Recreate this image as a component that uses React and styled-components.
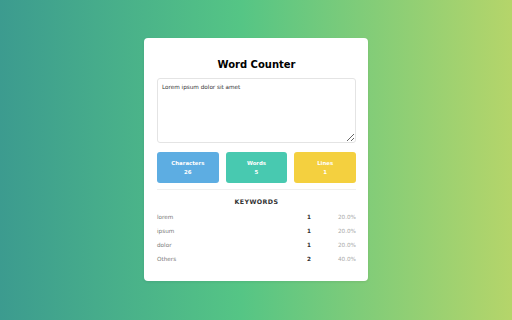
import styled, { createGlobalStyle } from "styled-components";

const Global = createGlobalStyle`
  html, body, #root { height: 100%; }
  body {
    margin: 0;
    font-family: "DejaVu Sans", "Noto Sans", sans-serif;
  }
`;

const Page = styled.div`
  width: 100vw;
  height: 100vh;
  background: linear-gradient(to right, #3c9b8f 0%, #55c585 47%, #b5d56a 100%);
  display: flex;
  justify-content: center;
  padding-top: 38px;
  box-sizing: border-box;
`;

const Card = styled.div`
  width: 224px;
  height: 243px;
  box-sizing: border-box;
  background: #fff;
  border-radius: 4px;
  padding: 19px 12px 0 13px;
  box-shadow: 0 1px 3px rgba(0, 0, 0, 0.08);
`;

const Title = styled.h1`
  margin: 0 0 5px;
  text-align: center;
  font-size: 10px;
  line-height: 16px;
  font-weight: 700;
  color: #000;
`;

const TextArea = styled.textarea`
  display: block;
  width: 100%;
  height: 65px;
  box-sizing: border-box;
  border: 1px solid #e4e4e4;
  border-radius: 3px;
  padding: 4px 4px;
  font-family: inherit;
  font-size: 5.7px;
  line-height: 8px;
  color: #333;
  outline: none;
`;

const Stats = styled.div`
  display: grid;
  grid-template-columns: repeat(3, 1fr);
  gap: 7px;
  margin-top: 9px;
`;

const Stat = styled.div`
  height: 31px;
  border-radius: 3px;
  background: ${(p) => p.$bg};
  color: #fff;
  display: flex;
  flex-direction: column;
  align-items: center;
  justify-content: center;
  gap: 3px;
  font-size: 5.4px;
  font-weight: 700;
`;

const Divider = styled.div`
  height: 1px;
  background: #f0f0f0;
  margin: 6px 0 8px;
`;

const Keywords = styled.div`
  text-align: center;
  font-size: 6.3px;
  letter-spacing: 0.4px;
  font-weight: 700;
  color: #333;
  line-height: 8px;
  margin-bottom: 4px;
`;

const Row = styled.div`
  display: grid;
  grid-template-columns: 1fr 30px 45px;
  height: 14px;
  align-items: center;
  font-size: 5.7px;
  color: #777;
`;

const Count = styled.span`
  text-align: right;
  font-weight: 700;
  color: #333;
`;

const Percent = styled.span`
  text-align: right;
  color: #aaa;
`;

const rows = [
  ["lorem", 1, "20.0%"],
  ["ipsum", 1, "20.0%"],
  ["dolor", 1, "20.0%"],
  ["Others", 2, "40.0%"],
];

export default function App() {
  return (
    <Page>
      <Global />
      <Card>
        <Title>Word Counter</Title>
        <TextArea defaultValue="Lorem ipsum dolor sit amet" />
        <Stats>
          <Stat $bg="#5dade2">
            <span>Characters</span>
            <span>26</span>
          </Stat>
          <Stat $bg="#48c9b0">
            <span>Words</span>
            <span>5</span>
          </Stat>
          <Stat $bg="#f4d03f">
            <span>Lines</span>
            <span>1</span>
          </Stat>
        </Stats>
        <Divider />
        <Keywords>KEYWORDS</Keywords>
        {rows.map(([word, n, pct]) => (
          <Row key={word}>
            <span>{word}</span>
            <Count>{n}</Count>
            <Percent>{pct}</Percent>
          </Row>
        ))}
      </Card>
    </Page>
  );
}
